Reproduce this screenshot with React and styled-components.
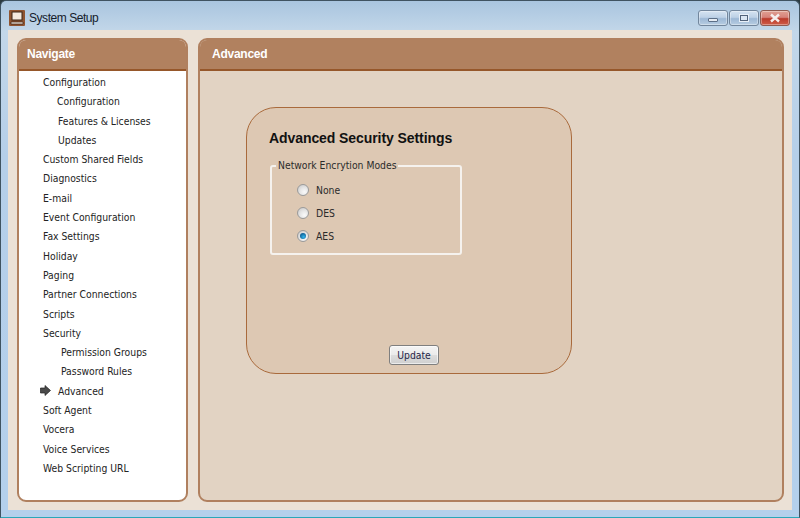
import React from 'react';
import styled, { createGlobalStyle } from 'styled-components';

const Global = createGlobalStyle`
  html, body { margin: 0; padding: 0; width: 800px; height: 518px; overflow: hidden; background: #2b3a40; }
  * { box-sizing: border-box; }
`;
const Win = styled.div`
  width: 800px; height: 518px; display: flex; flex-direction: column;
  padding: 1px 7px 7px; border-radius: 6px 6px 0 0; border: 1px solid #3f5361; border-bottom-color: #2aa7b8;
  background: linear-gradient(180deg, #a9c5df 0%, #c3d7e9 6%, #b5cfe9 30%, #b4d0ec 100%);
  font-family: "DejaVu Sans Condensed", "DejaVu Sans", sans-serif; font-stretch: condensed; font-size: 10.3px; color: #1d1d1d;
`;
const TitleBar = styled.div`
  height: 28px; flex: none; display: flex; align-items: center; padding-top: 4px; margin-left: 1px;
`;
const AppIcon = styled.svg` width: 16px; height: 16px; flex: none; `;
const Title = styled.div` margin-left: 4px; font: 12px "Liberation Sans", sans-serif; letter-spacing: -0.45px; color: #15202c; `;
const Controls = styled.div`
  margin-left: auto; margin-right: 2px; align-self: flex-start; margin-top: 4px; display: flex; gap: 1px;
`;
const Ctl = styled.div`
  width: 30px; height: 16px; border: 1px solid ${p => p.$close ? '#8f5a50' : '#72869c'}; border-radius: 3px;
  display: flex; align-items: center; justify-content: center;
  background: ${p => p.$close
    ? 'linear-gradient(180deg,#e0a093 0%,#d6827a 45%,#bb3b2c 55%,#cf5c48 100%)'
    : 'linear-gradient(180deg,#d5e3f1 0%,#bdd1e6 45%,#9db8d5 55%,#b7cde2 100%)'};
  box-shadow: inset 0 0 0 1px rgba(255,255,255,.35);
`;
const Min = styled.span`
  width: 10px; height: 4px; margin-top: 4px; background: #e6ecf3; border: 1px solid #5c6f87; border-radius: 1px;
`;
const Max = styled.span`
  width: 10px; height: 8px; border: 2px solid #52637a; background: #dbe6f2; outline: 1px solid #e8eff7; outline-offset: -1px;
`;
const Client = styled.div`
  flex: 1; display: flex; gap: 10px; padding: 8px 8px 8px 9px; background: #ebe1d6; min-height: 0;
`;
const Panel = styled.section`
  display: flex; flex-direction: column; min-height: 0;
  border: 2px solid #b0805f; border-radius: 9px; overflow: hidden;
  background: ${p => p.$bg};
  ${p => p.$w ? `width: ${p.$w}px; flex: none;` : 'flex: 1;'}
`;
const Head = styled.header`
  height: 31px; flex: none; background: #b1815f; border-bottom: 2px solid #96572a;
  color: #fff; font: 700 12px "Liberation Sans", sans-serif; letter-spacing: -0.25px; display: flex; align-items: center;
  padding-left: ${p => p.$pad}px; padding-bottom: 2px;
`;
const NavList = styled.nav` padding-top: 2px; display: flex; flex-direction: column; `;
const Item = styled.div`
  height: 19.3px; line-height: 19.3px; padding-left: ${p => p.$i}px; position: relative; white-space: nowrap; color: #232323;
`;
const Arrow = styled.svg` position: absolute; left: 21px; top: 3px; width: 11px; height: 11px; `;
const Body = styled.div`
  flex: 1; padding: 36px 0 0 46px;
`;
const Card = styled.div`
  width: 326px; height: 267px; border: 1px solid #a96a3c; border-radius: 30px; background: #ddc8b3;
  padding: 22px 21px 0 22px; display: flex; flex-direction: column; position: relative;
`;
const CardTitle = styled.h2`
  margin: 0; font: 700 14px/16px "Liberation Sans", sans-serif; letter-spacing: -0.08px; color: #111;
`;
const Group = styled.fieldset`
  margin: 13px 0 0 1px; padding: 0 0 0 25px; width: 192px; height: 96px; border: 2px solid #f5f2ee; border-radius: 3px;
  display: flex; flex-direction: column;
`;
const Legend = styled.legend`
  padding: 0 2px; margin-left: -21px; line-height: 13px; color: #2b2b2b;
`;
const RadioRow = styled.div`
  height: 23px; display: flex; align-items: center; gap: 7px; color: #2b2b2b; position: relative; top: 6px;
`;
const Radio = styled.span`
  width: 12px; height: 12px; border-radius: 50%; border: 1px solid #9a9a9a;
  background: radial-gradient(circle at 65% 70%, #fafafa 0%, #e6e6e6 45%, #c4c4c4 100%);
  display: flex; align-items: center; justify-content: center; flex: none;
`;
const Dot = styled.span`
  width: 6px; height: 6px; border-radius: 50%; background: radial-gradient(circle at 60% 65%, #35b6ec, #0d5f96 70%);
`;
const Update = styled.button`
  position: absolute; left: 142px; top: 237px; width: 50px; height: 20px; padding: 0;
  border: 1px solid #7f7f7f; border-radius: 3px; font: 10.3px "DejaVu Sans Condensed", "DejaVu Sans", sans-serif; font-stretch: condensed; color: #26264a;
  background: linear-gradient(180deg, #f4f4f4 0%, #ebebeb 48%, #dcdcdc 52%, #cfcfcf 100%);
  box-shadow: inset 0 0 0 1px rgba(255,255,255,.6);
`;

const nav = [
  ['Configuration', 24], ['Configuration', 38], ['Features & Licenses', 39], ['Updates', 39],
  ['Custom Shared Fields', 24], ['Diagnostics', 24], ['E-mail', 24], ['Event Configuration', 24],
  ['Fax Settings', 24], ['Holiday', 24], ['Paging', 24], ['Partner Connections', 24], ['Scripts', 24],
  ['Security', 24], ['Permission Groups', 42], ['Password Rules', 42], ['Advanced', 39, true],
  ['Soft Agent', 24], ['Vocera', 24], ['Voice Services', 24], ['Web Scripting URL', 24],
];

export default function App() {
  return (
    <>
      <Global />
      <Win>
        <TitleBar>
          <AppIcon viewBox="0 0 16 16">
            <rect x="0" y="0" width="16" height="16" rx="1" fill="#8f5430" />
            <rect x="3" y="2" width="10" height="8" fill="#f3e9de" stroke="#3a2415" />
            <path d="M2 12h12v2H2z" fill="#f3e9de" stroke="#3a2415" strokeWidth=".7" />
          </AppIcon>
          <Title>System Setup</Title>
          <Controls>
            <Ctl><Min /></Ctl>
            <Ctl><Max /></Ctl>
            <Ctl $close>
              <svg width="12" height="10" viewBox="0 0 12 10"><path d="M2 1.5 10 8.5M10 1.5 2 8.5" stroke="#f5eeee" strokeWidth="2.4" /></svg>
            </Ctl>
          </Controls>
        </TitleBar>
        <Client>
          <Panel $w={171} $bg="#fff">
            <Head $pad={8}>Navigate</Head>
            <NavList>
              {nav.map(([t, i, cur], k) => (
                <Item key={k} $i={i}>
                  {cur && <Arrow viewBox="0 0 11 11"><path d="M.5 3h4.5V.5L10.5 5.5 5 10.5V8H.5z" fill="#4a4a4a" stroke="#222" strokeWidth=".7" /></Arrow>}
                  {t}
                </Item>
              ))}
            </NavList>
          </Panel>
          <Panel $bg="#e2d3c3">
            <Head $pad={12}>Advanced</Head>
            <Body>
              <Card>
                <CardTitle>Advanced Security Settings</CardTitle>
                <Group>
                  <Legend>Network Encrytion Modes</Legend>
                  <RadioRow><Radio />None</RadioRow>
                  <RadioRow><Radio />DES</RadioRow>
                  <RadioRow><Radio><Dot /></Radio>AES</RadioRow>
                </Group>
                <Update>Update</Update>
              </Card>
            </Body>
          </Panel>
        </Client>
      </Win>
    </>
  );
}
